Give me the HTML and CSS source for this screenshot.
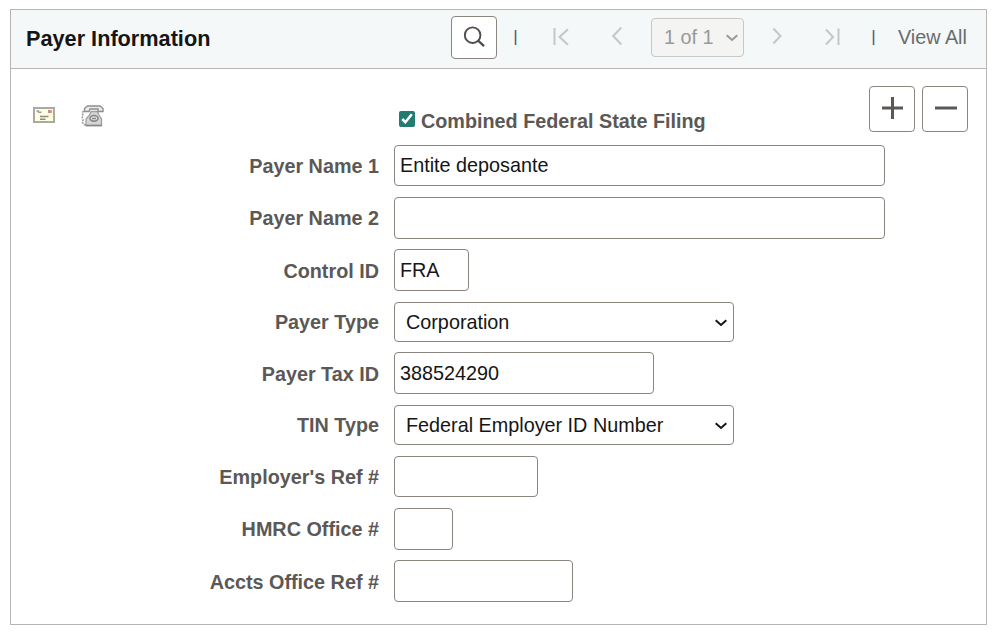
FILE: index.html
```html
<!DOCTYPE html>
<html lang="en">
<head>
    <meta charset="utf-8">
    <title>Payer Information</title>
    <link rel="stylesheet" href="styles.css">
</head>
<body>

<div class="panel">
    <div class="header">
        <h2 class="title">Payer Information</h2>
        <button class="btn find">
            <svg width="22" height="22" viewBox="0 0 24 24"><circle cx="10.5" cy="10" r="8.5" fill="none" stroke="#4f4d4c" stroke-width="2.1"/><path d="M16.5 16L23 22" stroke="#4f4d4c" stroke-width="2.5"/></svg>
        </button>
        <span class="sep sep-first">|</span>
        <svg class="first" width="17" height="20" viewBox="0 0 17 20"><path d="M2.5 2V19M16 3.2L7.5 11L16 18.8"/></svg>
        <svg class="prev" width="12" height="20" viewBox="0 0 12 20"><path d="M10.3 1.5L2.2 10L10.3 18.5"/></svg>
        <span class="select pager">
            <select disabled><option>1 of 1</option></select>
            <svg width="12" height="8" viewBox="0 0 12 8"><path d="M.7 1.2L6 6L11.3 1.2"/></svg>
        </span>
        <svg class="next" width="12" height="20" viewBox="0 0 12 20"><path d="M1.3 2.5L8.5 10L1.3 17.5"/></svg>
        <svg class="last" width="17" height="20" viewBox="0 0 17 20"><path d="M2 3.5L9 11L2 18.5M14.5 2.5V19"/></svg>
        <span class="sep sep-last">|</span>
        <span class="view-all">View All</span>
    </div>

    <div class="top-row">
        <!-- address and phone -->
        <svg class="address" width="22" height="16" viewBox="0 0 22 16">
            <rect x="1" y="1" width="20" height="14" fill="#ffffe0" stroke="#a9a9a6" stroke-width="2"/>
            <path d="M3.5 4H6M5 5.2H8.5" fill="none" stroke="#999" stroke-width="1.4"/>
            <rect x="15" y="3" width="2" height="3" fill="#b58bb0"/>
            <rect x="17" y="3" width="2" height="3" fill="#f09a55"/>
            <path d="M7 9.5H15.5M7 12.3H12.5" stroke="#8b8b88" stroke-width="1.6"/>
        </svg>
        <svg class="phone" width="23" height="22" viewBox="0 0 23 22">
            <path d="M2.5 6L1.2 8L2 10.5L1.2 13L2 15L1.2 17L3 19.5L5 20" fill="none" stroke="#999" stroke-width="1.5" stroke-dasharray="2 1"/>
            <path d="M10 6.5H16.5L18 10L20.5 14V20.5H5V14L8.5 10Z" fill="#d6d6d6" stroke="#a0a0a0" stroke-width="1.3"/>
            <path d="M3.5 6.5V3.5L6.5 1H19L22 3.5V6.5H17V4H9L8 6.5Z" fill="#ececec" stroke="#8d8d8d" stroke-width="1.4"/>
            <ellipse cx="13" cy="13.3" rx="4" ry="2.8" fill="#e4e4e4" stroke="#858585" stroke-width="1.6"/>
            <path d="M11 13.5H15M5 20.5H21" stroke="#888" stroke-width="1.4"/>
        </svg>
        <label class="check"><input type="checkbox" checked>Combined Federal State Filing</label>
        <button class="btn add">
            <svg width="22" height="22" viewBox="0 0 22 22"><path d="M0 11H21M10.5 0V22" stroke="#5b5856" stroke-width="3"/></svg>
        </button>
        <button class="btn remove">
            <svg width="22" height="22" viewBox="0 0 22 22"><path d="M0 11H22" stroke="#5b5856" stroke-width="3"/></svg>
        </button>
    </div>

    <div class="form">
        <label for="name1">Payer Name 1</label>
        <input id="name1" class="wide short" value="Entite deposante">

        <label for="name2">Payer Name 2</label>
        <input id="name2" class="wide">

        <label for="control" class="low">Control ID</label>
        <input id="control" class="control" value="FRA">

        <label for="type" class="high">Payer Type</label>
        <span class="select">
            <select id="type"><option>Corporation</option></select>
            <svg width="12" height="8" viewBox="0 0 12 8"><path d="M.7 1.2L6 6L11.3 1.2"/></svg>
        </span>

        <label for="tax" class="low">Payer Tax ID</label>
        <input id="tax" class="tax" value="388524290">

        <label for="tin" class="high">TIN Type</label>
        <span class="select">
            <select id="tin"><option>Federal Employer ID Number</option></select>
            <svg width="12" height="8" viewBox="0 0 12 8"><path d="M.7 1.2L6 6L11.3 1.2"/></svg>
        </span>

        <label for="employer">Employer's Ref #</label>
        <input id="employer" class="employer short">

        <label for="hmrc">HMRC Office #</label>
        <input id="hmrc" class="hmrc">

        <label for="accts" class="low">Accts Office Ref #</label>
        <input id="accts" class="accts">
    </div>
</div>

</body>
</html>
```

FILE: styles.css
```css
* {
    box-sizing: border-box;
}
body {
    margin: 0;
    padding: 9px 7px 0 10px;
    background: #fff;
    font-family: "Liberation Sans", Arial, sans-serif;
    font-size: 19.8px;
    color: #151515;
}
.panel {
    height: 616px;
    border: 1px solid #b8b4b1;
}
.header {
    display: flex;
    align-items: center;
    height: 59px;
    padding: 0 15px 4px;
    background: #f4f8f9;
    border-bottom: 1px solid #b8b4b1;
}
.header > * {
    flex-shrink: 0;
}
.title {
    width: 425px;
    margin: 4px 0 0;
    font-size: 21.7px;
    line-height: 26px;
}
.btn {
    display: flex;
    align-items: center;
    justify-content: center;
    width: 46px;
    height: 46px;
    padding: 0;
    background: #fff;
    border: 1px solid #8b8580;
    border-radius: 4px;
}
.top-row .btn svg {
    margin: -2px 0 0 2px;
}
.find {
    height: 43px;
}
.find svg {
    margin-top: -1px;
}
.sep {
    display: flex;
    justify-content: center;
    width: 5px;
    font-size: 17px;
    line-height: 20px;
    color: #3f5f70;
}
.sep-first {
    margin-left: 16px;
}
.sep-last {
    margin-left: 30px;
}
.header > svg {
    margin-top: -2px;
    fill: none;
    stroke: #c4c7c8;
    stroke-width: 2;
}
.first {
    margin-left: 34px;
}
.prev {
    margin-left: 42px;
}
.next {
    margin-left: 28px;
}
.last {
    margin-left: 40px;
}
.view-all {
    margin-left: 22px;
    line-height: 24px;
    color: #6b6b6b;
    white-space: nowrap;
}
.select {
    position: relative;
    display: block;
    width: 340px;
    height: 40px;
}
.select svg {
    position: absolute;
    right: 7px;
    top: 17px;
    fill: none;
    stroke: #151515;
    stroke-width: 2;
}
.pager {
    width: 93px;
    height: 39px;
    margin-left: 28px;
}
.pager svg {
    right: 6px;
    top: 16px;
    stroke: #999;
}
input, select {
    font-family: inherit;
    font-size: 19.8px;
    color: #151515;
    background: #fff;
    border: 1px solid #8b8580;
    border-radius: 4px;
}
select {
    appearance: none;
    width: 100%;
    height: 100%;
    padding: 0 0 0 11px;
}
.pager select {
    padding-left: 12px;
    color: #999;
    background: #f4f4f3;
    border-color: #c9c7c5;
    opacity: 1;
}
.top-row {
    display: flex;
    align-items: flex-start;
    height: 76px;
    padding: 17px 18px 0 22px;
}
.address {
    margin-top: 21px;
}
.phone {
    margin: 19px 0 0 26px;
}
.check {
    display: flex;
    width: 470px;
    margin: 23px 0 0 295px;
    line-height: 24px;
    font-weight: bold;
    color: #5b5856;
}
.check input {
    width: 16px;
    height: 16px;
    margin: 2px 6px 0 0;
    accent-color: #237c70;
}
.remove {
    margin-left: 7px;
}
.form {
    display: grid;
    grid-template-columns: 368px auto;
    grid-template-rows: 52px 52px 53px 50px 53px 51px 52px 52px 42px;
    column-gap: 15px;
    align-items: start;
}
.form label {
    text-align: right;
    line-height: 42px;
    font-weight: bold;
    color: #5b5856;
}
.form .low {
    line-height: 44px;
}
.form .high {
    line-height: 40px;
}
.form input {
    height: 42px;
    padding: 0 5px;
}
.form .short {
    height: 41px;
}
.wide {
    width: 491px;
}
.control {
    width: 75px;
}
.tax {
    width: 260px;
}
.employer {
    width: 144px;
}
.hmrc {
    width: 59px;
}
.accts {
    width: 179px;
}
```
